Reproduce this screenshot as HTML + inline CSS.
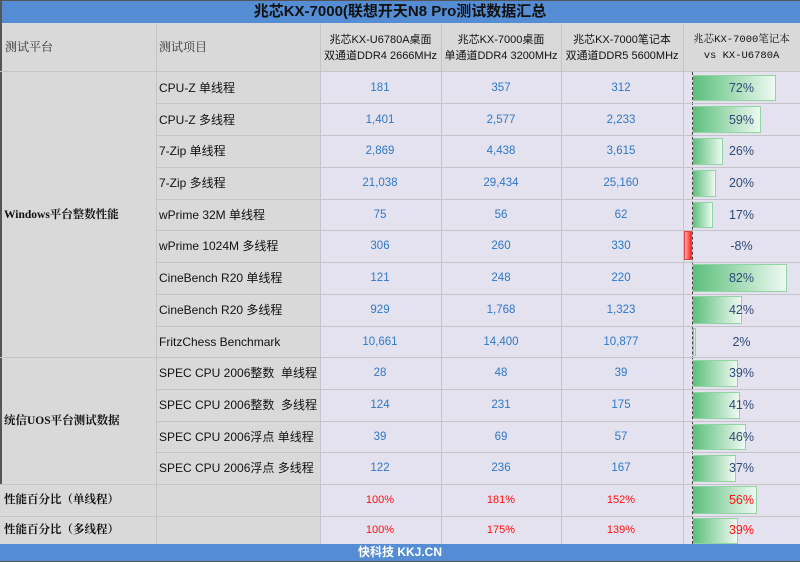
<!DOCTYPE html>
<html><head><meta charset="utf-8"><style>
*{margin:0;padding:0;box-sizing:border-box}
body{width:800px;height:562px;position:relative;overflow:hidden;background:#d9d9d9;font-family:"Liberation Sans","Noto Sans CJK SC",sans-serif;}
.a{position:absolute}
.title{left:0;top:0;width:800px;height:23px;background:#548dd4;border-top:1px solid #555;color:#111;font-weight:bold;font-size:15px;text-align:center;line-height:22px}
.d{background:#e5e2ef}
.hl{height:1px;background:#c4c4c8;left:0;width:800px}
.vl{width:1px;background:#c4c4cc}
.t{font-size:12px;color:#111;white-space:nowrap;left:159px;height:32px;line-height:32px}
.n{font-size:11.5px;color:#2d78c8;text-align:center;width:120px;height:32px;line-height:33px}
.r{font-size:11px;color:#ff1010;text-align:center;width:120px;height:32px;line-height:32px}
.bar{background:linear-gradient(90deg,#5cbf7c,#eef9f1);border:1px solid #8fd4a2;border-left:none}
.pc{font-size:12.5px;color:#2f4a7a;text-align:center;width:117px;left:683px;height:32px;line-height:32px}
.grp{font-family:"Liberation Serif","Noto Serif CJK SC",serif;font-weight:bold;font-size:11.5px;color:#111;line-height:14px}
.h{font-size:11px;color:#111;text-align:center;line-height:16px}
.c1{left:320px}.c2{left:441px}.c3{left:561px}
</style></head><body>
<div class="a title">兆芯KX-7000(联想开天N8 Pro测试数据汇总</div>
<div class="a d" style="left:320px;top:72px;width:480px;height:472px"></div>
<div class="a" style="left:0;top:0;width:2px;height:484px;background:#555"></div>
<div class="a" style="left:5px;top:40px;font-size:12px;color:#333;font-family:'Liberation Serif','Noto Serif CJK SC',serif;line-height:14px">测试平台</div>
<div class="a" style="left:159px;top:40px;font-size:12px;color:#333;font-family:'Liberation Serif','Noto Serif CJK SC',serif;line-height:14px">测试项目</div>
<div class="a h" style="left:320px;top:32px;width:121px">兆芯KX-U6780A桌面<br>双通道DDR4 2666MHz</div>
<div class="a h" style="left:441px;top:32px;width:120px">兆芯KX-7000桌面<br>单通道DDR4 3200MHz</div>
<div class="a h" style="left:561px;top:32px;width:122px">兆芯KX-7000笔记本<br>双通道DDR5 5600MHz</div>
<div class="a h" style="left:683px;top:32px;width:117px;font-family:'Liberation Mono','Noto Serif CJK SC',monospace;font-size:10.5px">兆芯KX-7000笔记本<br>vs KX-U6780A</div>
<div class="a vl" style="left:156px;top:23px;height:521px"></div>
<div class="a vl" style="left:320px;top:23px;height:521px"></div>
<div class="a vl" style="left:441px;top:23px;height:521px"></div>
<div class="a vl" style="left:561px;top:23px;height:521px"></div>
<div class="a vl" style="left:683px;top:23px;height:521px"></div>
<div class="a" style="left:692px;top:72px;height:472px;border-left:1px dashed #444"></div>
<div class="a hl" style="top:71px"></div>
<div class="a hl" style="top:103px;left:156px;width:644px"></div>
<div class="a hl" style="top:135px;left:156px;width:644px"></div>
<div class="a hl" style="top:167px;left:156px;width:644px"></div>
<div class="a hl" style="top:199px;left:156px;width:644px"></div>
<div class="a hl" style="top:230px;left:156px;width:644px"></div>
<div class="a hl" style="top:262px;left:156px;width:644px"></div>
<div class="a hl" style="top:294px;left:156px;width:644px"></div>
<div class="a hl" style="top:326px;left:156px;width:644px"></div>
<div class="a hl" style="top:357px"></div>
<div class="a hl" style="top:389px;left:156px;width:644px"></div>
<div class="a hl" style="top:421px;left:156px;width:644px"></div>
<div class="a hl" style="top:452px;left:156px;width:644px"></div>
<div class="a hl" style="top:484px"></div>
<div class="a hl" style="top:516px"></div>
<div class="a grp" style="left:4px;top:208px">Windows平台整数性能</div>
<div class="a grp" style="left:4px;top:414px">统信UOS平台测试数据</div>
<div class="a grp" style="left:4px;top:493px">性能百分比（单线程）</div>
<div class="a grp" style="left:4px;top:523px">性能百分比（多线程）</div>

<div class="a t" style="top:72px">CPU-Z 单线程</div>
<div class="a n c1" style="top:72px">181</div><div class="a n c2" style="top:72px">357</div><div class="a n c3" style="top:72px">312</div>
<div class="a bar" style="left:693px;top:75px;height:26px;width:83px"></div><div class="a pc" style="top:72px">72%</div>

<div class="a t" style="top:104px">CPU-Z 多线程</div>
<div class="a n c1" style="top:104px">1,401</div><div class="a n c2" style="top:104px">2,577</div><div class="a n c3" style="top:104px">2,233</div>
<div class="a bar" style="left:693px;top:106px;height:27px;width:68px"></div><div class="a pc" style="top:104px">59%</div>

<div class="a t" style="top:135px">7-Zip 单线程</div>
<div class="a n c1" style="top:135px">2,869</div><div class="a n c2" style="top:135px">4,438</div><div class="a n c3" style="top:135px">3,615</div>
<div class="a bar" style="left:693px;top:138px;height:27px;width:30px"></div><div class="a pc" style="top:135px">26%</div>

<div class="a t" style="top:167px">7-Zip 多线程</div>
<div class="a n c1" style="top:167px">21,038</div><div class="a n c2" style="top:167px">29,434</div><div class="a n c3" style="top:167px">25,160</div>
<div class="a bar" style="left:693px;top:170px;height:27px;width:23px"></div><div class="a pc" style="top:167px">20%</div>

<div class="a t" style="top:199px">wPrime 32M 单线程</div>
<div class="a n c1" style="top:199px">75</div><div class="a n c2" style="top:199px">56</div><div class="a n c3" style="top:199px">62</div>
<div class="a bar" style="left:693px;top:202px;height:26px;width:20px"></div><div class="a pc" style="top:199px">17%</div>

<div class="a t" style="top:230px">wPrime 1024M 多线程</div>
<div class="a n c1" style="top:230px">306</div><div class="a n c2" style="top:230px">260</div><div class="a n c3" style="top:230px">330</div>
<div class="a" style="left:684px;top:231px;height:29px;width:8px;background:linear-gradient(90deg,#ffb0b0,#ff2020);border:1px solid #e04040"></div><div class="a pc" style="top:230px">-8%</div>

<div class="a t" style="top:262px">CineBench R20 单线程</div>
<div class="a n c1" style="top:262px">121</div><div class="a n c2" style="top:262px">248</div><div class="a n c3" style="top:262px">220</div>
<div class="a bar" style="left:693px;top:264px;height:28px;width:94px"></div><div class="a pc" style="top:262px">82%</div>

<div class="a t" style="top:294px">CineBench R20 多线程</div>
<div class="a n c1" style="top:294px">929</div><div class="a n c2" style="top:294px">1,768</div><div class="a n c3" style="top:294px">1,323</div>
<div class="a bar" style="left:693px;top:296px;height:28px;width:49px"></div><div class="a pc" style="top:294px">42%</div>

<div class="a t" style="top:326px">FritzChess Benchmark</div>
<div class="a n c1" style="top:326px">10,661</div><div class="a n c2" style="top:326px">14,400</div><div class="a n c3" style="top:326px">10,877</div>
<div class="a bar" style="left:693px;top:328px;height:28px;width:3px"></div><div class="a pc" style="top:326px">2%</div>

<div class="a t" style="top:357px">SPEC CPU 2006整数&nbsp; 单线程</div>
<div class="a n c1" style="top:357px">28</div><div class="a n c2" style="top:357px">48</div><div class="a n c3" style="top:357px">39</div>
<div class="a bar" style="left:693px;top:360px;height:27px;width:45px"></div><div class="a pc" style="top:357px">39%</div>

<div class="a t" style="top:389px">SPEC CPU 2006整数&nbsp; 多线程</div>
<div class="a n c1" style="top:389px">124</div><div class="a n c2" style="top:389px">231</div><div class="a n c3" style="top:389px">175</div>
<div class="a bar" style="left:693px;top:392px;height:27px;width:47px"></div><div class="a pc" style="top:389px">41%</div>

<div class="a t" style="top:421px">SPEC CPU 2006浮点 单线程</div>
<div class="a n c1" style="top:421px">39</div><div class="a n c2" style="top:421px">69</div><div class="a n c3" style="top:421px">57</div>
<div class="a bar" style="left:693px;top:424px;height:26px;width:53px"></div><div class="a pc" style="top:421px">46%</div>

<div class="a t" style="top:452px">SPEC CPU 2006浮点 多线程</div>
<div class="a n c1" style="top:452px">122</div><div class="a n c2" style="top:452px">236</div><div class="a n c3" style="top:452px">167</div>
<div class="a bar" style="left:693px;top:455px;height:27px;width:43px"></div><div class="a pc" style="top:452px">37%</div>

<div class="a r c1" style="top:484px">100%</div><div class="a r c2" style="top:484px">181%</div><div class="a r c3" style="top:484px">152%</div>
<div class="a bar" style="left:693px;top:486px;height:28px;width:64px"></div><div class="a pc" style="top:484px;color:#ff1010">56%</div>

<div class="a r c1" style="top:514px">100%</div><div class="a r c2" style="top:514px">175%</div><div class="a r c3" style="top:514px">139%</div>
<div class="a bar" style="left:693px;top:518px;height:26px;width:45px"></div><div class="a pc" style="top:514px;color:#ff1010">39%</div>

<div class="a" style="left:0;top:544px;width:800px;height:17px;background:#548dd4;color:#fff;font-weight:bold;font-size:12px;text-align:center;line-height:17px">快科技 KKJ.CN</div>
<div class="a" style="left:0;top:561px;width:800px;height:1px;background:#555"></div>
</body></html>
